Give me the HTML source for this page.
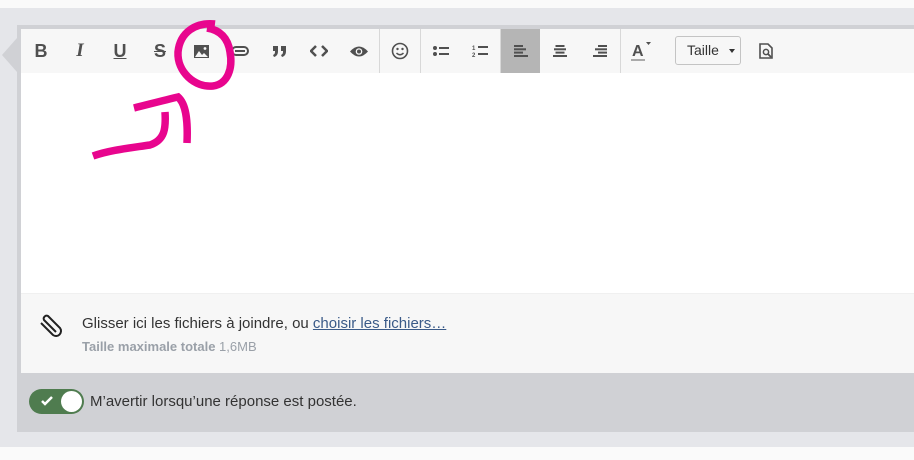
<!DOCTYPE html>
<html><head><meta charset="utf-8"><style>
*{margin:0;padding:0;box-sizing:border-box}
body{width:914px;height:460px;background:#fafafa;position:relative;overflow:hidden;font-family:"Liberation Sans",sans-serif}
.band{position:absolute;left:0;top:8px;width:914px;height:439px;background:#e5e6ea}
.box{position:absolute;left:17px;top:25px;width:897px;height:407px;background:#d0d1d5}
.tb{position:absolute;left:21px;top:29px;width:893px;height:44px;background:#f7f7f7}
.ed{position:absolute;left:21px;top:73px;width:893px;height:221px;background:#fff;border-bottom:1px solid #f0f0f0}
.att{position:absolute;left:21px;top:294px;width:893px;height:79px;background:#f7f7f7}
.ic{position:absolute;top:29px;height:44px;width:40px;display:flex;align-items:center;justify-content:center;color:#505050;font-weight:bold;font-size:18px}
.sep{position:absolute;top:29px;width:1px;height:44px;background:#d8d8d8}
</style></head><body>
<div class="band"></div>
<svg style="position:absolute;left:0;top:38px" width="18" height="36"><polygon points="17,0 17,34 2,17" fill="#d0d1d5"/></svg>
<div class="box"></div>
<div class="tb"></div>
<div class="ed"></div>
<div class="att"></div>
<div class="ic" style="left:21px">B</div>
<div class="ic" style="left:60px;font-family:'Liberation Serif',serif;font-style:italic;font-size:19px">I</div>
<div class="ic" style="left:100px;text-decoration:underline">U</div>
<div class="ic" style="left:140px;text-decoration:line-through">S</div>
<div class="ic" style="left:181px"><svg width="15" height="13"><rect x="0" y="0" width="15" height="13" fill="#505050"/><polygon points="1,12 5,6 8,10 10,8 14,12" fill="#f7f7f7"/><circle cx="11" cy="3.5" r="1.4" fill="#f7f7f7"/></svg></div>
<div class="ic" style="left:220px"><svg width="18" height="10"><rect x="1" y="1" width="16" height="8" rx="4" fill="none" stroke="#505050" stroke-width="2"/><line x1="4" y1="5" x2="14" y2="5" stroke="#505050" stroke-width="2"/></svg></div>
<div class="ic" style="left:260px"><svg width="16" height="12"><path d="M1 1h5v5c0 3-1 5-4 6l-1-2c2-1 2-2 2-4H1z M9 1h5v5c0 3-1 5-4 6l-1-2c2-1 2-2 2-4H9z" fill="#505050"/></svg></div>
<div class="ic" style="left:299px"><svg width="18" height="12"><path d="M6 1L1 6l5 5M12 1l5 5-5 5" fill="none" stroke="#505050" stroke-width="2.5"/></svg></div>
<div class="ic" style="left:339px"><svg width="20" height="13"><path d="M1 6.5Q10 -3.5 19 6.5Q10 16.5 1 6.5Z" fill="#505050"/><circle cx="10" cy="6.5" r="3.3" fill="#f7f7f7"/><circle cx="10" cy="6.5" r="2" fill="#505050"/></svg></div>
<div class="sep" style="left:379px"></div>
<div class="ic" style="left:380px"><svg width="18" height="18"><circle cx="9" cy="9" r="7.5" fill="none" stroke="#505050" stroke-width="1.6"/><circle cx="6.5" cy="7" r="1.2" fill="#505050"/><circle cx="11.5" cy="7" r="1.2" fill="#505050"/><path d="M5.5 11Q9 14.5 12.5 11" fill="none" stroke="#505050" stroke-width="1.5"/></svg></div>
<div class="sep" style="left:420px"></div>
<div class="ic" style="left:421px"><svg width="16" height="12"><circle cx="2" cy="3" r="2" fill="#505050"/><circle cx="2" cy="9" r="2" fill="#505050"/><rect x="6" y="2" width="10" height="2" fill="#505050"/><rect x="6" y="8" width="10" height="2" fill="#505050"/></svg></div>
<div class="ic" style="left:460px"><svg width="16" height="14"><text x="0" y="6" font-size="6" fill="#505050" font-family="Liberation Sans">1</text><text x="0" y="13" font-size="6" fill="#505050" font-family="Liberation Sans">2</text><rect x="6" y="2" width="10" height="2" fill="#505050"/><rect x="6" y="9" width="10" height="2" fill="#505050"/></svg></div>
<div class="sep" style="left:500px"></div>
<div class="ic" style="left:501px;width:39px;background:#b5b5b5"><svg width="14" height="12"><rect y="0" width="9" height="2" fill="#505050"/><rect y="3.3" width="12" height="2" fill="#505050"/><rect y="6.6" width="9" height="2" fill="#505050"/><rect y="10" width="14" height="2" fill="#505050"/></svg></div>
<div class="ic" style="left:540px"><svg width="14" height="12"><rect x="2.5" y="0" width="9" height="2" fill="#505050"/><rect x="1" y="3.3" width="12" height="2" fill="#505050"/><rect x="2.5" y="6.6" width="9" height="2" fill="#505050"/><rect y="10" width="14" height="2" fill="#505050"/></svg></div>
<div class="ic" style="left:580px"><svg width="14" height="12"><rect x="5" y="0" width="9" height="2" fill="#505050"/><rect x="2" y="3.3" width="12" height="2" fill="#505050"/><rect x="5" y="6.6" width="9" height="2" fill="#505050"/><rect y="10" width="14" height="2" fill="#505050"/></svg></div>
<div class="sep" style="left:620px"></div>
<div class="ic" style="left:621px"><svg width="22" height="22"><text x="2" y="16" font-size="16" font-weight="bold" fill="#505050" font-family="Liberation Sans">A</text><rect x="1" y="19" width="14" height="2" fill="#aaa"/><polygon points="16,2 21,2 18.5,5" fill="#505050"/></svg></div>
<div style="position:absolute;left:675px;top:36px;width:66px;height:29px;border:1px solid #c4c4c4;border-radius:3px;background:#f7f7f7;font-size:14px;color:#333;padding:5px 0 0 11px">Taille <span style="display:inline-block;width:0;height:0;border-left:3.5px solid transparent;border-right:3.5px solid transparent;border-top:4px solid #333;margin-left:6px;vertical-align:middle"></span></div>
<div class="ic" style="left:746px"><svg width="14" height="16"><path d="M1 1h8l4 4v10H1z" fill="none" stroke="#505050" stroke-width="1.6"/><circle cx="7" cy="9" r="2.6" fill="none" stroke="#505050" stroke-width="1.5"/><line x1="9" y1="11" x2="12" y2="14" stroke="#505050" stroke-width="1.8"/></svg></div>
<svg style="position:absolute;left:36px;top:312px" width="30" height="30"><path d="M20 20L8 8a3 3 0 0 1 4-4l12 12a5 5 0 0 1-7 7L5 11" fill="none" stroke="#222" stroke-width="2"/></svg>
<div style="position:absolute;left:82px;top:315px;font-size:15px;color:#333">Glisser ici les fichiers à joindre, ou <span style="color:#3a5a88;text-decoration:underline">choisir les fichiers…</span></div>
<div style="position:absolute;left:82px;top:339px;font-size:13px;color:#9aa0a8"><b>Taille maximale totale</b> 1,6MB</div>
<div style="position:absolute;left:29px;top:389px;width:55px;height:25px;border-radius:13px;background:#4f7c4f"></div>
<div style="position:absolute;left:61px;top:391px;width:21px;height:21px;border-radius:50%;background:#fff"></div>
<svg style="position:absolute;left:41px;top:396px" width="12" height="10"><path d="M1 5l3 3 7-7" fill="none" stroke="#fff" stroke-width="2.5"/></svg>
<div style="position:absolute;left:90px;top:393px;font-size:15px;color:#333">M’avertir lorsqu’une réponse est postée.</div>
<svg style="position:absolute;left:0;top:0" width="914" height="460"><g fill="none" stroke="#e8058e" stroke-width="7.5" stroke-linecap="butt">
<path d="M215 24C196 22 180 32 178 52C177 72 195 88 213 86C228 84 233 68 230 52C228 38 220 30 207 28"/>
<path d="M134 108C150 104 165 100 178 97C186 104 188 120 187 143"/>
<path d="M93 156C110 150 130 148 150 145C165 140 166 128 165 112"/>
</g></svg>
</body></html>
